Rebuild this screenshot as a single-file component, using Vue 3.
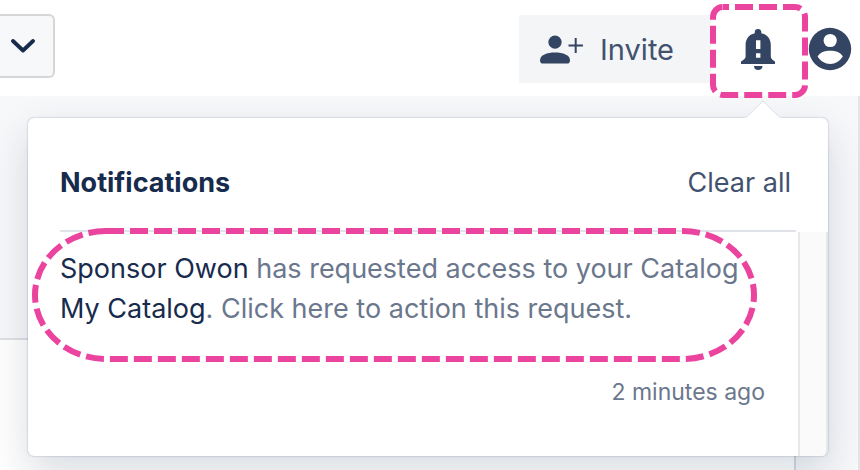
<script setup>
import { ref } from 'vue'

const notifications = ref([
  { id: 1, actor: 'Sponsor Owon', target: 'My Catalog', time: '2 minutes ago' },
])
</script>

<template>
  <div class="page">
    <header class="topbar">
      <button class="switcher" type="button" aria-label="Open menu">
        <svg width="24" height="14" viewBox="0 0 24 14" aria-hidden="true">
          <path d="M2 2 L12 11.5 L22 2" fill="none" stroke="#172b4d" stroke-width="3.8" stroke-linecap="round" stroke-linejoin="round" />
        </svg>
      </button>
      <div class="actions">
        <button class="invite" type="button">
          <svg width="44" height="30" viewBox="0 0 44 30" fill="#344563" aria-hidden="true">
            <circle cx="15" cy="7.2" r="6.6" />
            <path d="M0 25.5 C0 20 7 17.6 15 17.6 S30 20 30 25.5 C30 27.6 29 28.6 27 28.6 H3 C1 28.6 0 27.6 0 25.5 Z" />
            <path d="M28.5 10.4 H43 M35.7 3 V18" fill="none" stroke="#344563" stroke-width="2" />
          </svg>
          Invite
        </button>
        <button class="bell" type="button" aria-label="Notifications">
          <svg width="34" height="42" viewBox="0 0 34 42" fill="#344563" aria-hidden="true">
            <path fill-rule="evenodd" d="M17 1 C19 1 20.3 2.2 20.3 4 V5.2 C26.5 6.6 29.8 11.2 29.8 17 V28.4 C29.8 30.4 31 31.4 34 33.6 V36 H0 V33.6 C3 31.4 4.6 30.4 4.6 28.4 V17 C4.6 11.2 7.6 6.6 13.8 5.2 V4 C13.8 2.2 15 1 17 1 Z M15 12.2 V21 H19.4 V12.2 Z M15 25.2 V29.8 H19.4 V25.2 Z" />
            <path d="M13 38 H21.5 C21.5 40.6 19.8 42 17.2 42 S13 40.6 13 38 Z" />
          </svg>
          <svg class="bell-outline" width="98" height="94" viewBox="0 0 98 94" aria-hidden="true">
            <rect class="dashes shifted" x="3" y="3" width="92" height="88" rx="10" />
          </svg>
        </button>
        <button class="account" type="button" aria-label="Account">
          <svg width="44" height="44" viewBox="0 0 44 44" aria-hidden="true">
            <circle cx="22" cy="22" r="21.2" fill="#344563" />
            <circle cx="22.2" cy="13.5" r="6.6" fill="#fff" />
            <path d="M9.6 29.6 C11.5 25.5 16.5 23.8 22.2 23.8 S33 25.5 34.8 29.6 C31.5 34.5 27.5 37 22.2 37 S12.8 34.5 9.6 29.6 Z" fill="#fff" />
          </svg>
        </button>
      </div>
    </header>

    <main class="content">
      <div class="sheet"></div>
    </main>

    <section class="panel" aria-labelledby="panel-title">
      <svg class="pointer" width="36" height="19" viewBox="0 0 36 19" aria-hidden="true">
        <path d="M0 18 L17 1 L19 1 L36 18 V19 H0 Z" fill="#fff" />
        <path d="M1 17.5 L18 0.8 L35 17.5" fill="none" stroke="#d5d9e0" />
      </svg>
      <div class="panel-head">
        <h2 id="panel-title">Notifications</h2>
        <button class="clear" type="button">Clear all</button>
      </div>
      <div class="scroller">
        <ul class="list">
          <li v-for="item in notifications" :key="item.id">
            <a class="message" href="#">
              <b>{{ item.actor }}</b> has requested access to your Catalog <b>{{ item.target }}</b>. Click here to action this request.
              <svg class="message-outline" aria-hidden="true">
                <rect class="dashes pill" x="3" y="3" rx="71" ry="64" />
              </svg>
            </a>
            <time>{{ item.time }}</time>
          </li>
        </ul>
        <div class="track"></div>
      </div>
    </section>
  </div>
</template>

<style>
body {
  margin: 0;
}
</style>

<style scoped>
.page {
  position: relative;
  display: flex;
  flex-direction: column;
  min-height: 100vh;
  overflow: hidden;
  background: #fff;
  color: #172b4d;
  font-family: Inter, "Liberation Sans", sans-serif;
}
button {
  margin: 0;
  padding: 0;
  border: 0;
  background: none;
  color: inherit;
  font: inherit;
}
svg {
  display: block;
  flex: none;
}
.topbar {
  display: flex;
  justify-content: space-between;
  align-items: flex-start;
  height: 82px;
  padding: 14px 8px 0 0;
}
.switcher {
  display: flex;
  align-items: center;
  box-sizing: border-box;
  height: 64px;
  padding: 0 18px 0 11px;
  border: 2px solid #d6d6d6;
  border-left: 0;
  border-radius: 0 6px 6px 0;
  background: #f7f8fa;
}
.actions {
  display: flex;
  align-items: center;
  height: 70px;
}
.invite {
  display: flex;
  align-items: center;
  gap: 16px;
  box-sizing: border-box;
  height: 68px;
  padding: 1px 37px 0 21px;
  background: #f4f5f7;
  color: #42526e;
  font-size: 29px;
}
.bell {
  position: relative;
  padding: 0 33px 0 30px;
}
.bell-outline {
  position: absolute;
  top: -24px;
  left: -1px;
  z-index: 2;
}
.dashes {
  fill: none;
  stroke: #eb449f;
  stroke-width: 6;
  stroke-dasharray: 18 6;
}
.shifted {
  stroke-dashoffset: 12;
}
.content {
  display: flex;
  flex: 1;
  padding: 242px 62px 0 0;
  border-right: 2px solid #e3e5e8;
  background: #f7f8fa;
}
.sheet {
  flex: 1;
  border-top: 2px solid #dfe0e3;
  border-right: 2px solid #d5d9de;
  background: #fff;
}
.panel {
  position: absolute;
  top: 118px;
  right: 32px;
  left: 28px;
  box-sizing: border-box;
  border-radius: 6px;
  background: #fff;
  box-shadow: 0 0 2px rgba(9, 30, 66, 0.35), 0 16px 40px rgba(9, 30, 66, 0.16);
}
.pointer {
  position: absolute;
  top: -18px;
  right: 47px;
}
.panel-head {
  display: flex;
  justify-content: space-between;
  align-items: center;
  height: 112px;
  margin: 0 32px;
  padding: 0 5px 0 0;
  border-bottom: 2px solid #dfe3e8;
}
h2,
.clear {
  margin: 18px 0 0;
  font-size: 27px;
  line-height: 32px;
}
h2 {
  font-weight: 700;
}
.clear {
  color: #42526e;
}
.scroller {
  display: flex;
  height: 224px;
}
.list {
  flex: 1;
  margin: 0;
  padding: 0 33px 0 32px;
  list-style: none;
}
.message {
  position: relative;
  display: block;
  padding: 17px 20px 0 0;
  color: #6b778c;
  font-size: 27px;
  line-height: 40px;
  text-decoration: none;
}
.message b {
  color: #172b4d;
  font-weight: 400;
}
.message-outline {
  position: absolute;
  top: -4px;
  left: -28px;
  width: calc(100% + 20px);
  height: 134px;
}
.pill {
  width: calc(100% - 6px);
  height: 128px;
}
time {
  display: block;
  margin-top: 49px;
  color: #6b778c;
  font-size: 23px;
  line-height: 28px;
  text-align: right;
}
.track {
  box-sizing: border-box;
  width: 30px;
  border: 2px solid #e8e8e8;
  border-width: 0 2px;
  border-radius: 0 0 6px 0;
  background: #fafafa;
}
</style>
